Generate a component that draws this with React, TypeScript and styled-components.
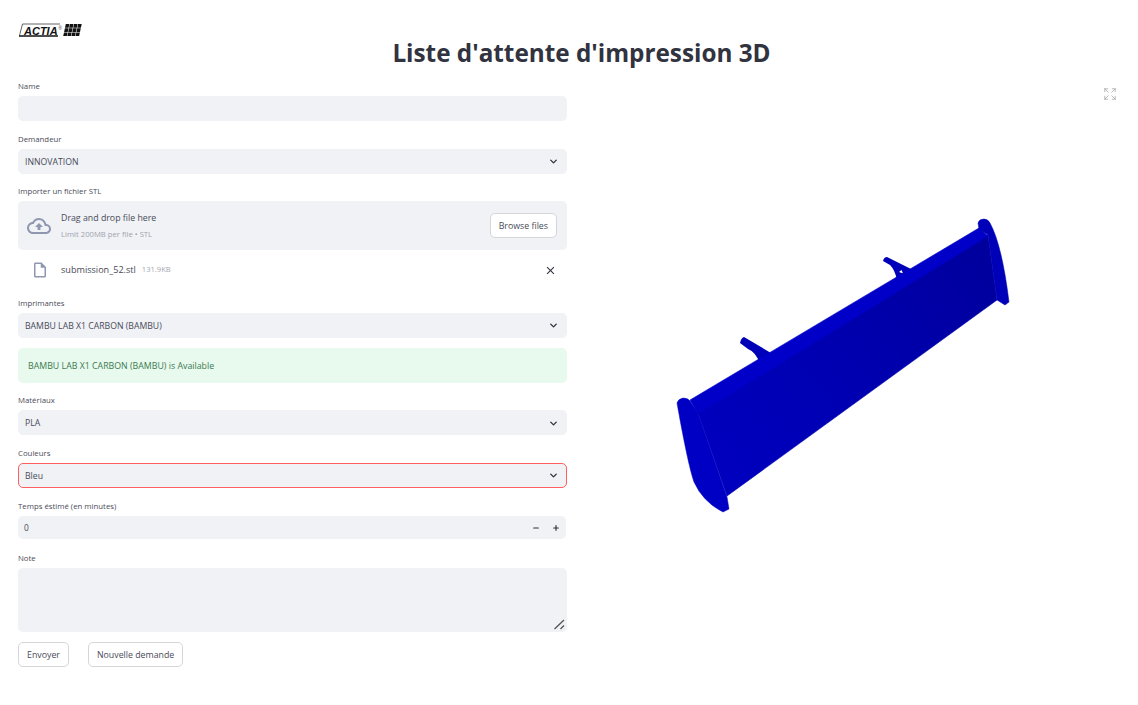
import React from "react";
import styled, { createGlobalStyle } from "styled-components";
import { MdOutlineCloudUpload, MdOutlineInsertDriveFile, MdClose } from "react-icons/md";
import { ChevronDown, Expand, Minus, Plus } from "lucide-react";

const GlobalStyle = createGlobalStyle`
  html, body {
    margin: 0;
    padding: 0;
    background: #fff;
    color: #31333f;
    font-family: "Open Sans", "Noto Sans", sans-serif;
  }
  * { box-sizing: border-box; }
`;

const Page = styled.div`
  width: 1138px;
  height: 705px;
  padding: 23px 18px 0;
  overflow: hidden;
`;
const Header = styled.header`
  height: 56px;
`;
const Title = styled.h1`
  margin: -1px 0 0;
  padding-left: 25px;
  text-align: center;
  font-size: 24.3px;
  line-height: 32px;
  font-weight: 700;
  color: #31333f;
`;
const Columns = styled.div`
  display: flex;
  gap: 15px;
`;
const Form = styled.div`
  width: 549px;
  display: flex;
  flex-direction: column;
  gap: 10.6px;
`;
const Field = styled.div`
  display: flex;
  flex-direction: column;
`;
const Label = styled.label`
  height: 14px;
  margin-bottom: 3px;
  font-size: 7.8px;
  line-height: 14px;
  color: #4a4c58;
`;
const TextInput = styled.input`
  height: 25px;
  width: 100%;
  border: none;
  outline: none;
  border-radius: 5px;
  background: #f0f2f6;
`;
const Select = styled.div<{ $error?: boolean }>`
  height: 25px;
  display: flex;
  align-items: center;
  justify-content: space-between;
  padding: 1px 7px 0 6px;
  border-radius: 5px;
  background: #f0f2f6;
  border: 1px solid ${(p) => (p.$error ? "#ff5f5f" : "#f0f2f6")};
  font-size: 8.7px;
  color: #494b57;
  svg { display: block; }
`;
const Uploader = styled.div`
  height: 49px;
  display: flex;
  align-items: center;
  padding: 0 10px 0 9px;
  border-radius: 5px;
  background: #f0f2f6;
`;
const CloudIcon = styled(MdOutlineCloudUpload)`
  font-size: 24px;
  color: #8f97b0;
`;
const UploadText = styled.div`
  margin-left: 10px;
  flex: 1;
  display: flex;
  flex-direction: column;
  gap: 3px;
`;
const UploadTitle = styled.span`
  font-size: 8.8px;
  line-height: 14px;
  color: #494b57;
`;
const UploadHint = styled.span`
  font-size: 7.7px;
  line-height: 12px;
  color: #a0a3ae;
`;
const Button = styled.button`
  height: 25px;
  padding: 0 8px;
  background: #fff;
  border: 1px solid #d5d6da;
  border-radius: 5px;
  font-family: inherit;
  font-size: 8.8px;
  color: #494b57;
`;
const FileRow = styled.div`
  height: 35px;
  padding: 3px 8px 0 13px;
  display: flex;
  align-items: center;
`;
const FileIcon = styled(MdOutlineInsertDriveFile)`
  font-size: 18px;
  margin-top: 2px;
  color: #8f97b0;
`;
const FileName = styled.span`
  margin-left: 12px;
  font-size: 9.1px;
  color: #494b57;
`;
const FileSize = styled.span`
  margin-left: 6px;
  flex: 1;
  font-size: 7.6px;
  color: #a5a7b0;
`;
const RemoveIcon = styled(MdClose)`
  font-size: 13px;
  margin: 3px 2px 0 0;
  color: #31333f;
`;
const Alert = styled.div`
  height: 34.4px;
  display: flex;
  align-items: center;
  padding: 0 10px;
  border-radius: 5px;
  background: #e8f9ee;
  font-size: 8.8px;
  color: #3b7a4f;
`;
const NumberBox = styled.div`
  height: 23px;
  margin: 0.5px 1px 1px 0;
  display: flex;
  align-items: center;
  padding: 0 6px;
  border-radius: 5px;
  background: #f0f2f6;
  font-size: 8.4px;
  color: #494b57;
`;
const NumberValue = styled.span`
  flex: 1;
`;
const Stepper = styled.span`
  display: flex;
  gap: 12px;
  color: #31333f;
  svg { display: block; }
`;
const NoteWrap = styled.div`
  position: relative;
`;
const NoteArea = styled.textarea`
  height: 64px;
  width: 100%;
  display: block;
  border: none;
  outline: none;
  border-radius: 5px;
  background: #f0f2f6;
  resize: none;
`;
const Grip = styled.svg`
  position: absolute;
  right: 2px;
  bottom: 2px;
`;
const Actions = styled.div`
  display: flex;
  gap: 19px;
`;
const Viewer = styled.div`
  position: relative;
  width: 538px;
  height: 600px;
`;
const FullscreenIcon = styled(Expand)`
  position: absolute;
  top: 8px;
  right: 3px;
  color: #a9a9a9;
`;
const WingSvg = styled.svg`
  display: block;
  width: 538px;
  height: 600px;
`;

const Chevron = () => <ChevronDown size={11} strokeWidth={3} color="#31333f" />;

const Logo = () => (
  <svg width="66" height="15" viewBox="0 0 66 15" style={{ display: "block" }}>
    <path d="M42 1H4.5L1.5 12.5" fill="none" stroke="#222" strokeWidth="0.7" />
    <path d="M1 13H40" stroke="#111" strokeWidth="1.3" />
    <text x="6" y="11.6" fontFamily="Liberation Sans" fontWeight="700" fontStyle="italic" fontSize="11" fill="#111">
      ACTIA
    </text>
    <text x="40.5" y="6.5" fontFamily="Liberation Sans" fontSize="4.5" fill="#333">
      ®
    </text>
    <g fill="#111" transform="translate(2 0) skewX(-12)">
      {[0, 1, 2].map((r) =>
        [0, 1, 2, 3].map((c) => <rect key={`${r}-${c}`} x={46 + c * 4.1} y={1 + r * 4.2} width="3.6" height="3.7" />)
      )}
    </g>
  </svg>
);

// the wing is drawn in page coordinates, the viewer starts at x=582 y=79
const Wing = () => (
  <WingSvg viewBox="582 79 538 600">
    <defs>
      <linearGradient id="face" gradientUnits="userSpaceOnUse" x1="710" y1="490" x2="990" y2="240">
        <stop offset="0" stopColor="#0000c0" />
        <stop offset="0.5" stopColor="#0000b0" />
        <stop offset="1" stopColor="#00009c" />
      </linearGradient>
    </defs>
    <path d="M740 343Q741 338 744 337L771 353L760 364Q756 352 748 349z" fill="#0000b8" />
    <path d="M883 261Q884 257 887 257L913 270L897 280Q895 270 890 265z" fill="#0000b8" />
    <path d="M899 272L901.5 270L903 273.5z" fill="#fff" />
    <path d="M698 413L988 235L997 300L727 496z" fill="url(#face)" stroke="#0000b0" strokeWidth="0.6" />
    <path d="M690 400L979 228L988 236L698 414z" fill="#0000c8" stroke="#0000c8" strokeWidth="0.6" />
    <path d="M677 403Q678 399 683 398Q688 398 690 401L698 413L727 497L729 509L723 512Q703 502 694 482Q688 465 677 403z" fill="#0000c4" stroke="#0000c4" strokeWidth="0.5" />
    <path d="M978 223Q979 219 984 219Q988 219 990 223Q1002 245 1009 302L1005 305L997 300L988 235L979 229z" fill="#0000b8" stroke="#0000b8" strokeWidth="0.5" />
  </WingSvg>
);

const App = () => (
  <Page>
    <GlobalStyle />
    <Header>
      <Logo />
      <Title>Liste d'attente d'impression 3D</Title>
    </Header>
    <Columns>
      <Form>
        <Field>
          <Label>Name</Label>
          <TextInput />
        </Field>
        <Field>
          <Label>Demandeur</Label>
          <Select>
            INNOVATION
            <Chevron />
          </Select>
        </Field>
        <Field>
          <Label>Importer un fichier STL</Label>
          <Uploader>
            <CloudIcon />
            <UploadText>
              <UploadTitle>Drag and drop file here</UploadTitle>
              <UploadHint>Limit 200MB per file • STL</UploadHint>
            </UploadText>
            <Button>Browse files</Button>
          </Uploader>
          <FileRow>
            <FileIcon />
            <FileName>submission_52.stl</FileName>
            <FileSize>131.9KB</FileSize>
            <RemoveIcon />
          </FileRow>
        </Field>
        <Field>
          <Label>Imprimantes</Label>
          <Select>
            BAMBU LAB X1 CARBON (BAMBU)
            <Chevron />
          </Select>
        </Field>
        <Alert>BAMBU LAB X1 CARBON (BAMBU) is Available</Alert>
        <Field>
          <Label>Matériaux</Label>
          <Select>
            PLA
            <Chevron />
          </Select>
        </Field>
        <Field>
          <Label>Couleurs</Label>
          <Select $error>
            Bleu
            <Chevron />
          </Select>
        </Field>
        <Field>
          <Label>Temps éstimé (en minutes)</Label>
          <NumberBox>
            <NumberValue>0</NumberValue>
            <Stepper>
              <Minus size={8} strokeWidth={3.5} />
              <Plus size={8} strokeWidth={3.5} />
            </Stepper>
          </NumberBox>
        </Field>
        <Field>
          <Label>Note</Label>
          <NoteWrap>
            <NoteArea />
            <Grip width="11" height="11" viewBox="0 0 11 11">
              <path d="M0.5 10L10 1M6.5 10L10 6.5" stroke="#555" strokeWidth="1.3" fill="none" />
            </Grip>
          </NoteWrap>
        </Field>
        <Actions>
          <Button>Envoyer</Button>
          <Button>Nouvelle demande</Button>
        </Actions>
      </Form>
      <Viewer>
        <Wing />
        <FullscreenIcon size={14} strokeWidth={1.4} />
      </Viewer>
    </Columns>
  </Page>
);

export default App;
